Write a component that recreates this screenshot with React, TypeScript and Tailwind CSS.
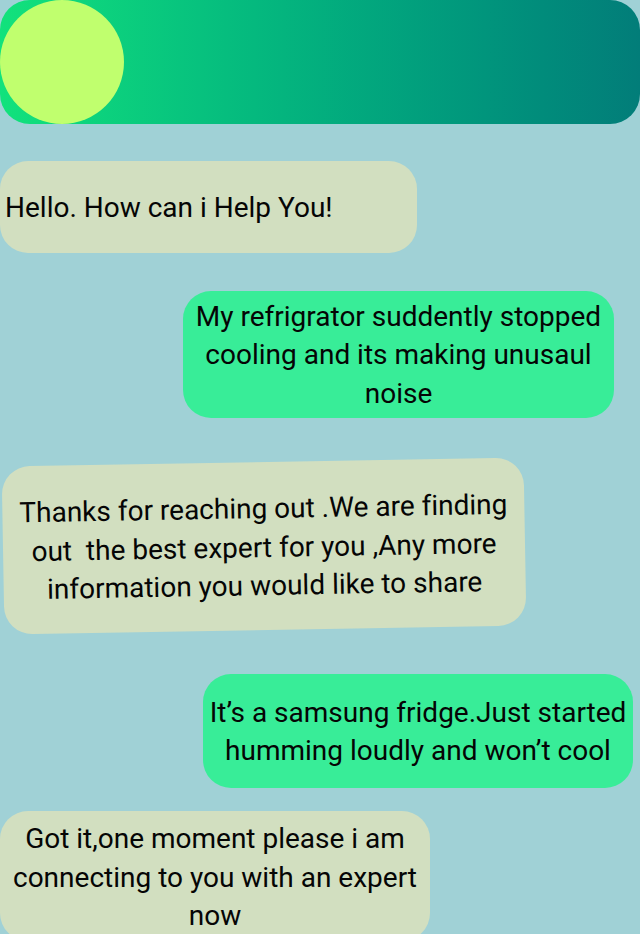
const MESSAGES = [
  { id: 1, from: "bot", text: "Hello. How can i Help You!" },
  { id: 2, from: "user", text: "My refrigrator suddently stopped cooling and its making unusaul noise" },
  { id: 3, from: "bot", text: "Thanks for reaching out .We are finding out\u00a0 the best expert for you ,Any more information you would like to share" },
  { id: 4, from: "user", text: "It\u2019s a samsung fridge.Just started humming loudly and won\u2019t cool" },
  { id: 5, from: "bot", text: "Got it,one moment please i am connecting to you with an expert now" },
];

export default function App() {
  return (
    <div className="h-[934px] w-[640px] overflow-hidden bg-[#a0d1d6] font-['Roboto',sans-serif] text-[28px] text-[#050505] [font-variant-ligatures:none]">
      {/* header */}
      <div className="flex h-[124px] items-center rounded-[30px] bg-gradient-to-r from-[#12e27c] to-[#027d79]">
        <div className="size-[124px] rounded-full bg-[#c0ff6e]" />
      </div>

      <div className="flex flex-col">
        <div className="mt-[37px] flex h-[92px] w-[417px] items-center rounded-[28px] bg-[#d2dfc0] pl-[5px] pt-[1px]">
          {MESSAGES[0].text}
        </div>

        <div className="mt-[38px] ml-[183px] flex h-[127px] w-[431px] items-center justify-center rounded-[28px] bg-[#38ed98] px-2 pt-[2px] text-center leading-[38.5px]">
          {MESSAGES[1].text}
        </div>

        <div className="mt-[44px] ml-[3px] flex h-[168px] w-[522px] -rotate-1 items-center justify-center rounded-[28px] bg-[#d2dfc0] px-3 pt-[4px] text-center leading-[38.5px]">
          {MESSAGES[2].text}
        </div>

        <div className="mt-[44px] ml-[203px] flex h-[114px] w-[430px] items-center justify-center rounded-[28px] bg-[#38ed98] px-1 pt-[2px] text-center leading-[38.5px]">
          {MESSAGES[3].text}
        </div>

        <div className="mt-[23px] flex h-[130px] w-[430px] items-start justify-center rounded-[28px] bg-[#d2dfc0] px-2 pt-[9px] text-center leading-[38.5px]">
          {MESSAGES[4].text}
        </div>
      </div>
    </div>
  );
}
